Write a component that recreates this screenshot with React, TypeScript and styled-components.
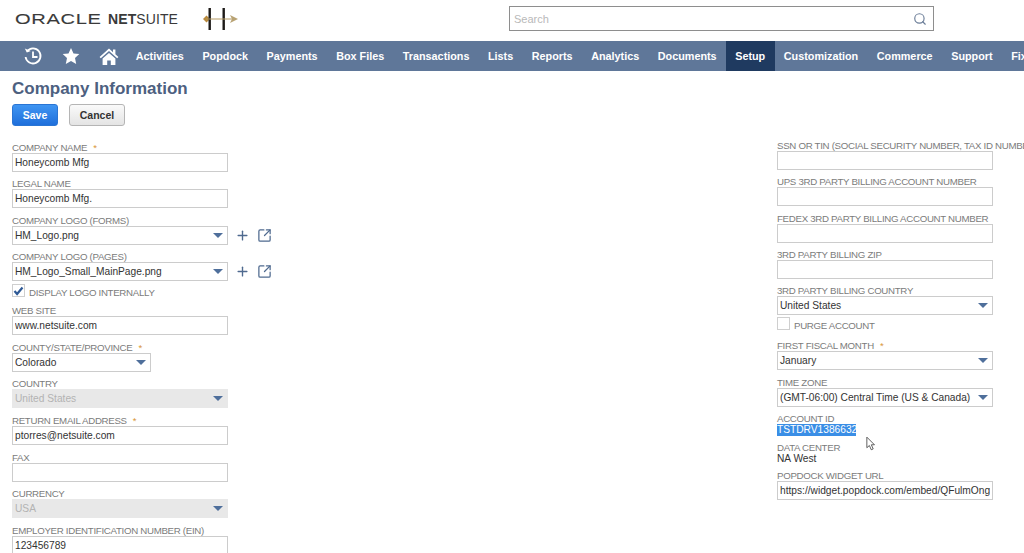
import React from "react";
import styled, { createGlobalStyle } from "styled-components";
import { Plus, Search, SquareArrowOutUpRight } from "lucide-react";

const GlobalStyle = createGlobalStyle`
    html, body {
        margin: 0;
        padding: 0;
        background: #fff;
        overflow: hidden;
    }
    body {
        font-family: "Liberation Sans", Arial, sans-serif;
    }
`;

const navItems = [
    "Activities",
    "Popdock",
    "Payments",
    "Box Files",
    "Transactions",
    "Lists",
    "Reports",
    "Analytics",
    "Documents",
    "Setup",
    "Customization",
    "Commerce",
    "Support",
    "Fixed Assets",
];

const Field = ({ label, value, required }: { label: string; value?: string; required?: boolean }) => (
    <FieldRow>
        <Label>
            {label}
            {required && <Star>*</Star>}
        </Label>
        <TextInput readOnly value={value ?? ""} />
    </FieldRow>
);

const Dropdown = ({ value, disabled, narrow }: { value: string; disabled?: boolean; narrow?: boolean }) => (
    <SelectBox $disabled={disabled} $narrow={narrow}>
        <span>{value}</span>
        <Arrow />
    </SelectBox>
);

const SelectField = ({
    label,
    value,
    required,
    disabled,
    narrow,
    actions,
}: {
    label: string;
    value: string;
    required?: boolean;
    disabled?: boolean;
    narrow?: boolean;
    actions?: boolean;
}) => (
    <FieldRow>
        <Label>
            {label}
            {required && <Star>*</Star>}
        </Label>
        <SelectLine>
            <Dropdown value={value} disabled={disabled} narrow={narrow} />
            {actions && (
                <Actions>
                    <Plus size={15} strokeWidth={2.2} />
                    <SquareArrowOutUpRight size={15} strokeWidth={2} />
                </Actions>
            )}
        </SelectLine>
    </FieldRow>
);

export default function App() {
    return (
        <Page>
            <GlobalStyle />
            <Header>
                <Logo>
                    <Oracle>ORACLE</Oracle>
                    <NetSuite>
                        <b>NET</b>SUITE
                    </NetSuite>
                </Logo>
                <svg width="38" height="24" viewBox="0 0 38 24">
                    <path d="M1 12l3.500-3.500L8 12l-3.500 3.500z" fill="#b98a3c" />
                    <rect x="6.500" y="1" width="2.400" height="22" fill="#1d1a18" />
                    <rect x="20.500" y="1" width="2.400" height="22" fill="#1d1a18" />
                    <path d="M4 12h30" stroke="#b59a62" strokeWidth="1" />
                    <path d="M28 8l8 4-8 4 2-4z" fill="#b8a273" />
                </svg>
                <SearchBox>
                    <span>Search</span>
                    <Search size={14} color="#6d7f99" />
                </SearchBox>
            </Header>
            <Nav>
                <NavIcons>
                    <svg width="20" height="20" viewBox="0 0 20 20" fill="none" stroke="#fff" strokeWidth="1.800">
                        <path d="M4 5.500A7.500 7.500 0 1 1 2.600 11" />
                        <path d="M1.800 2.500l2 4 4-1.400" fill="#fff" stroke="none" />
                        <path d="M10 5.500V11H14.500" />
                    </svg>
                    <svg width="18" height="18" viewBox="0 0 18 18">
                        <path d="M9 1l2.500 5.400 5.800.7-4.300 4 1.200 5.800L9 14l-5.200 2.900L5 11.100l-4.300-4 5.800-.7z" fill="#fff" />
                    </svg>
                    <svg width="20" height="19" viewBox="0 0 20 19" fill="#fff">
                        <path d="M10 1.500L.6 10l1.200 1.300L10 4l8.200 7.300 1.200-1.300-3-2.700V2.500h-2.400v2.700z" />
                        <path d="M3.600 11.600L10 6l6.400 5.600V18h-4.600v-4.400H8.200V18H3.600z" />
                    </svg>
                </NavIcons>
                {navItems.map((item) => (
                    <NavItem key={item} $active={item === "Setup"}>
                        {item}
                    </NavItem>
                ))}
            </Nav>
            <Content>
                <Title>Company Information</Title>
                <ButtonRow>
                    <SaveButton>Save</SaveButton>
                    <CancelButton>Cancel</CancelButton>
                </ButtonRow>
                <Columns>
                    <LeftColumn>
                        <Field label="COMPANY NAME" value="Honeycomb Mfg" required />
                        <Field label="LEGAL NAME" value="Honeycomb Mfg." />
                        <SelectField label="COMPANY LOGO (FORMS)" value="HM_Logo.png" actions />
                        <SelectField label="COMPANY LOGO (PAGES)" value="HM_Logo_Small_MainPage.png" actions />
                        <CheckRow>
                            <CheckBox>
                                <svg width="11" height="10" viewBox="0 0 11 10">
                                    <path d="M1.500 5l2.600 3L9.500 1.500" fill="none" stroke="#2f5a96" strokeWidth="2.200" />
                                </svg>
                            </CheckBox>
                            <CheckLabel>DISPLAY LOGO INTERNALLY</CheckLabel>
                        </CheckRow>
                        <Field label="WEB SITE" value="www.netsuite.com" />
                        <LowerFields>
                            <SelectField label="COUNTY/STATE/PROVINCE" value="Colorado" required narrow />
                            <SelectField label="COUNTRY" value="United States" disabled />
                            <Field label="RETURN EMAIL ADDRESS" value="ptorres@netsuite.com" required />
                            <Field label="FAX" />
                            <SelectField label="CURRENCY" value="USA" disabled />
                            <Field label="EMPLOYER IDENTIFICATION NUMBER (EIN)" value="123456789" />
                        </LowerFields>
                    </LeftColumn>
                    <RightColumn>
                        <Field label="SSN OR TIN (SOCIAL SECURITY NUMBER, TAX ID NUMBER)" />
                        <Field label="UPS 3RD PARTY BILLING ACCOUNT NUMBER" />
                        <Field label="FEDEX 3RD PARTY BILLING ACCOUNT NUMBER" />
                        <Field label="3RD PARTY BILLING ZIP" />
                        <SelectField label="3RD PARTY BILLING COUNTRY" value="United States" />
                        <PurgeRow>
                            <CheckBox />
                            <CheckLabel>PURGE ACCOUNT</CheckLabel>
                        </PurgeRow>
                        <SelectField label="FIRST FISCAL MONTH" value="January" required />
                        <SelectField label="TIME ZONE" value="(GMT-06:00) Central Time (US & Canada)" />
                        <AccountField>
                            <Label>ACCOUNT ID</Label>
                            <Selected>TSTDRV1386632</Selected>
                            <CursorMark width="11" height="15" viewBox="0 0 13 17">
                                <path d="M1 1v12.500l3-2.600 2.200 5 2.300-1-2.200-4.900H10z" fill="#fff" stroke="#444" strokeWidth="1" />
                            </CursorMark>
                        </AccountField>
                        <CenterField>
                            <Label>DATA CENTER</Label>
                            <StaticValue>NA West</StaticValue>
                        </CenterField>
                        <Field label="POPDOCK WIDGET URL" value="https://widget.popdock.com/embed/QFulmOngfXw2" />
                    </RightColumn>
                </Columns>
            </Content>
        </Page>
    );
}

const Page = styled.div`
    width: 1024px;
    height: 553px;
    overflow: hidden;
    background: #fff;
`;

const Header = styled.header`
    height: 41px;
    display: flex;
    align-items: center;
    padding: 0 0 4px 15px;
    box-sizing: border-box;
`;

const Logo = styled.div`
    width: 187px;
    display: flex;
    align-items: center;
    gap: 8px;
    color: #3a3a3a;
`;

const Oracle = styled.span`
    font-size: 15px;
    letter-spacing: 0.5px;
    transform: scaleX(1.34);
    transform-origin: left center;
    width: 85px;
    -webkit-text-stroke: 0.1px #3a3a3a;
`;

const NetSuite = styled.span`
    font-size: 14px;
    letter-spacing: 0.1px;
`;

const SearchBox = styled.div`
    margin-left: 269px;
    width: 425px;
    height: 25px;
    box-sizing: border-box;
    border: 1px solid #8e8e8e;
    display: flex;
    align-items: center;
    justify-content: space-between;
    padding: 0 6px 0 4px;
    font-size: 11px;
    color: #b9b9b9;
`;

const Nav = styled.nav`
    height: 30px;
    background: #5f7799;
    display: flex;
    align-items: stretch;
    white-space: nowrap;
`;

const NavIcons = styled.div`
    width: 126.500px;
    padding-left: 23px;
    box-sizing: border-box;
    display: flex;
    align-items: center;
    gap: 19px;
    flex-shrink: 0;
`;

const NavItem = styled.div<{ $active?: boolean }>`
    padding: 0 9.300px;
    display: flex;
    align-items: center;
    font-size: 10.800px;
    font-weight: 700;
    color: #fff;
    flex-shrink: 0;
    background: ${(props) => (props.$active ? "#1f3a60" : "transparent")};
`;

const Content = styled.main`
    padding: 7px 0 0 12px;
`;

const Title = styled.h1`
    margin: 0;
    font-size: 17px;
    line-height: 21px;
    font-weight: 700;
    color: #4d6080;
`;

const ButtonRow = styled.div`
    display: flex;
    gap: 11px;
    margin-top: 5px;
`;

const SaveButton = styled.div`
    width: 46px;
    height: 22px;
    box-sizing: border-box;
    display: flex;
    align-items: center;
    justify-content: center;
    border-radius: 3px;
    background: linear-gradient(#3f95f2, #1f6fdb);
    border: 1px solid #2a75d4;
    color: #fff;
    font-size: 10.500px;
    font-weight: 700;
`;

const CancelButton = styled(SaveButton)`
    width: 56px;
    background: linear-gradient(#fafafa, #e4e4e4);
    border: 1px solid #b5b5b5;
    color: #333;
`;

const Columns = styled.div`
    display: flex;
    align-items: flex-start;
    margin-top: 11px;
`;

const LeftColumn = styled.div`
    width: 216px;
    margin-top: 2px;
`;

const RightColumn = styled.div`
    width: 216px;
    margin-left: 549px;
`;

const FieldRow = styled.div`
    height: 36.330px;
`;

const LowerFields = styled.div`
    margin-top: 0.700px;

    ${FieldRow} {
        height: 36.700px;
    }
`;

const Label = styled.div`
    height: 14px;
    line-height: 18px;
    font-size: 9.700px;
    letter-spacing: -0.3px;
    color: #7b7b7b;
    white-space: nowrap;
`;

const Star = styled.span`
    color: #d9963a;
    margin-left: 6px;
`;

const TextInput = styled.input`
    display: block;
    width: 100%;
    height: 19px;
    box-sizing: border-box;
    border: 1px solid #cccccc;
    padding: 0 2px;
    outline: none;
    font-family: inherit;
    font-size: 10.200px;
    color: #333;
`;

const SelectLine = styled.div`
    display: flex;
    align-items: center;
`;

const SelectBox = styled.div<{ $disabled?: boolean; $narrow?: boolean }>`
    width: ${(props) => (props.$narrow ? "139px" : "216px")};
    height: 19px;
    box-sizing: border-box;
    flex-shrink: 0;
    border: 1px solid ${(props) => (props.$disabled ? "#e8e8e8" : "#cccccc")};
    background: ${(props) => (props.$disabled ? "#e8e8e8" : "#fff")};
    color: ${(props) => (props.$disabled ? "#b3b3b3" : "#333")};
    padding: 0 4px 0 2px;
    display: flex;
    align-items: center;
    justify-content: space-between;
    font-size: 10.200px;
    white-space: nowrap;
`;

const Arrow = styled.i`
    width: 0;
    height: 0;
    border-left: 5px solid transparent;
    border-right: 5px solid transparent;
    border-top: 5px solid #4f6f9b;
`;

const Actions = styled.div`
    display: flex;
    align-items: center;
    gap: 7px;
    margin-left: 7px;
    color: #4f6a8f;
`;

const CheckRow = styled.div`
    height: 17.400px;
    display: flex;
    align-items: flex-start;
    gap: 4px;
`;

const PurgeRow = styled(CheckRow)`
    height: 18.700px;
    margin-top: -2px;
    margin-bottom: 2px;
`;

const CheckBox = styled.div`
    width: 13px;
    height: 13px;
    box-sizing: border-box;
    border: 1px solid #cfcfcf;
    display: flex;
    align-items: center;
    justify-content: center;
`;

const CheckLabel = styled.span`
    font-size: 9.700px;
    letter-spacing: -0.3px;
    line-height: 12px;
    margin-top: 3px;
    color: #7b7b7b;
`;

const AccountField = styled.div`
    position: relative;
    height: 29.500px;
`;

const CenterField = styled.div`
    height: 27.500px;
`;

const Selected = styled.div`
    width: 79px;
    height: 12px;
    line-height: 12px;
    background: #3a8ee6;
    color: #fff;
    font-size: 10.200px;
    white-space: nowrap;
`;

const StaticValue = styled.div`
    height: 12px;
    line-height: 12px;
    font-size: 10.200px;
    color: #333;
`;

const CursorMark = styled.svg`
    position: absolute;
    left: 89px;
    top: 26px;
`;
